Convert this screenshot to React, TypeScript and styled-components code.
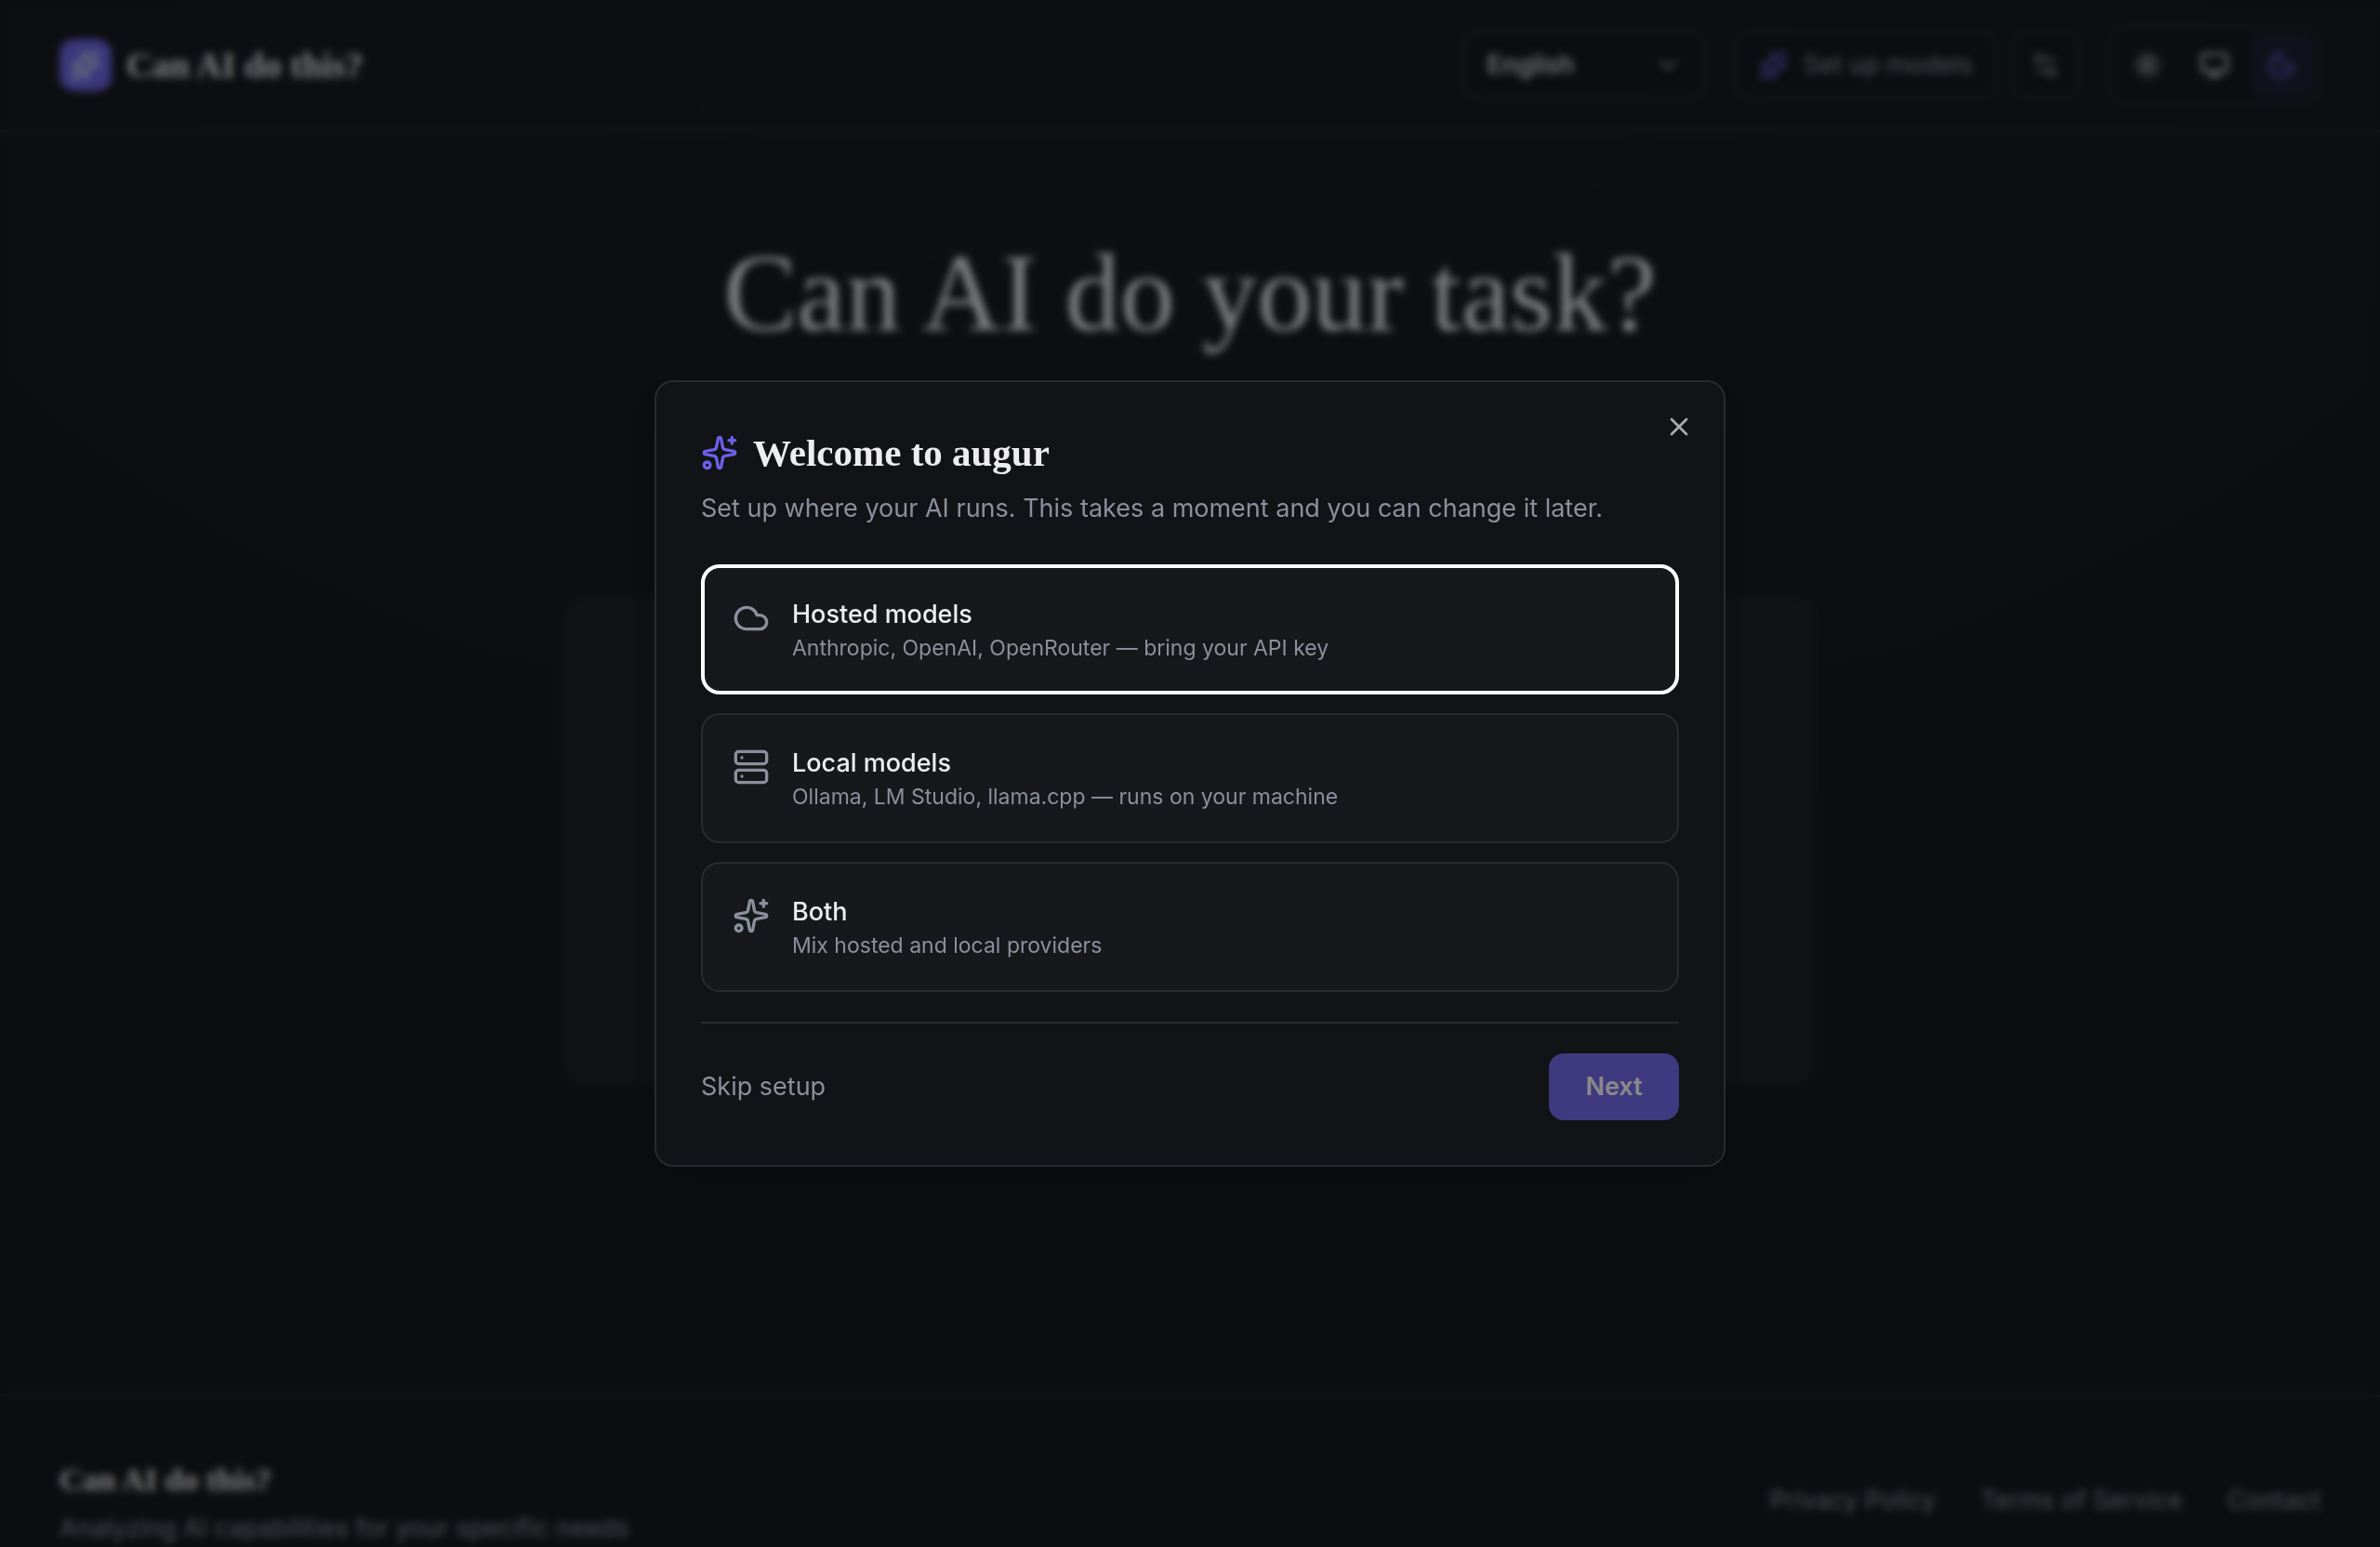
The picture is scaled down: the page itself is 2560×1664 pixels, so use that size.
import React from "react";
import styled, { createGlobalStyle, css } from "styled-components";
import {
  ChevronDown,
  Cloud,
  Monitor,
  Moon,
  Server,
  Settings2,
  Sparkles,
  Sun,
  X,
  type LucideIcon,
} from "lucide-react";

const color = {
  bg: "#0c0d10",
  panel: "#121316",
  option: "#17181b",
  surface: "#15161b",
  border: "#272b30",
  text: "#ededef",
  muted: "#8b909e",
  primary: "#6c61e8",
};

const sans = `Inter, "Liberation Sans", sans-serif`;
const serif = `"Liberation Serif", "Times New Roman", serif`;

const GlobalStyle = createGlobalStyle`
  *, *::before, *::after { box-sizing: border-box; }
  body {
    margin: 0;
    background: ${color.bg};
    color: ${color.text};
    font-family: ${sans};
    font-size: 27px;
    line-height: 40px;
  }
  button, select { font: inherit; color: inherit; }
  h1, h2, p { margin: 0; }
`;

/* Page behind the dialog */

const Page = styled.div`
  display: flex;
  flex-direction: column;
  height: 100vh;
  overflow: hidden;
  background: radial-gradient(ellipse 70% 60% at 50% 0, #101116, ${color.bg});
`;

const Header = styled.header`
  flex: none;
  display: flex;
  align-items: center;
  justify-content: space-between;
  height: 142px;
  padding: 0 64px;
  border-bottom: 2px solid ${color.border};
`;

const Brand = styled.a`
  display: flex;
  align-items: center;
  gap: 16px;
  color: ${color.text};
  font: 700 38px/56px ${serif};
  text-decoration: none;
`;

const BrandMark = styled.span`
  display: grid;
  place-items: center;
  width: 56px;
  height: 56px;
  border-radius: 16px;
  background: ${color.primary};
`;

const Toolbar = styled.div`
  display: flex;
  align-items: center;
  gap: 32px;
`;

const ToolGroup = styled.div`
  display: flex;
  gap: 16px;
`;

const outlined = css`
  height: 72px;
  border: 2px solid ${color.border};
  border-radius: 16px;
  background: ${color.bg};
`;

const LanguageField = styled.label`
  display: grid;
  align-items: center;
  width: 260px;
  color: ${color.muted};

  > * { grid-area: 1 / 1; }
  > svg { justify-self: end; margin-right: 24px; pointer-events: none; }
`;

const LanguageSelect = styled.select`
  ${outlined}
  width: 100%;
  padding: 0 64px 0 24px;
  appearance: none;
  color: ${color.text};
  font-weight: 500;
`;

const ToolButton = styled.button<{ $square?: boolean }>`
  ${outlined}
  display: flex;
  align-items: center;
  justify-content: center;
  gap: 16px;
  width: ${(p) => (p.$square ? "72px" : "auto")};
  padding: ${(p) => (p.$square ? "0" : "0 24px")};
  color: ${color.muted};
`;

const ThemeSwitch = styled.div`
  display: flex;
  gap: 4px;
  padding: 6px;
  border: 2px solid ${color.border};
  border-radius: 20px;
  background: ${color.bg};
`;

const ThemeButton = styled.button<{ $active?: boolean }>`
  display: grid;
  place-items: center;
  width: 68px;
  height: 68px;
  padding: 0;
  border: 0;
  border-radius: 14px;
  background: ${(p) => (p.$active ? "#17152b" : "transparent")};
  color: ${(p) => (p.$active ? color.primary : color.text)};
`;

const Main = styled.main`
  flex: none;
  display: flex;
  flex-direction: column;
  align-items: center;
  gap: 262px;
  padding: 112px 64px 332px;
`;

const Headline = styled.h1`
  font: 400 118px/124px ${serif};
  text-align: center;
`;

const TaskPanel = styled.section`
  width: 100%;
  max-width: 1348px;
  min-height: 528px;
  border-radius: 24px;
  background: ${color.surface};
`;

const Footer = styled.footer`
  flex: none;
  display: flex;
  align-items: center;
  justify-content: space-between;
  padding: 62px 64px;
  border-top: 2px solid ${color.border};
  color: ${color.muted};
`;

const FooterAbout = styled.div`
  display: flex;
  flex-direction: column;
  gap: 4px;
`;

const FooterTitle = styled.p`
  color: ${color.text};
  font: 700 34px/56px ${serif};
`;

const FooterNav = styled.nav`
  display: flex;
  gap: 48px;
`;

const FooterLink = styled.a`
  color: inherit;
  text-decoration: none;
`;

/* Dialog */

const Overlay = styled.div`
  position: fixed;
  inset: 0;
  display: grid;
  place-items: center;
  padding: 32px;
  background: rgba(12, 13, 16, 0.5);
  backdrop-filter: blur(4px);
`;

const Dialog = styled.div`
  position: relative;
  display: flex;
  flex-direction: column;
  gap: 32px;
  width: 100%;
  max-width: 1152px;
  padding: 48px;
  border: 2px solid ${color.border};
  border-radius: 20px;
  background: ${color.panel};
  box-shadow: 0 20px 30px -6px rgba(0, 0, 0, 0.14);
`;

const CloseButton = styled.button`
  position: absolute;
  top: 32px;
  right: 32px;
  display: grid;
  padding: 0;
  border: 0;
  background: none;
  opacity: 0.7;
`;

const DialogHeader = styled.div`
  display: flex;
  flex-direction: column;
  gap: 12px;
  margin-bottom: 8px;
  color: ${color.muted};
`;

const DialogTitle = styled.h2`
  display: flex;
  align-items: center;
  gap: 16px;
  color: ${color.text};
  font: 700 41px/56px ${serif};

  > svg { color: ${color.primary}; }
`;

const OptionList = styled.div`
  display: flex;
  flex-direction: column;
  gap: 20px;
`;

const Option = styled.button<{ $focused?: boolean }>`
  display: flex;
  gap: 24px;
  padding: 32px;
  border: 2px solid ${color.border};
  border-radius: 20px;
  background: ${color.option};
  color: ${color.muted};
  text-align: left;
  ${(p) =>
    p.$focused &&
    css`
      outline: 4px solid #fff;
      outline-offset: -4px;
    `}

  > svg { flex: none; margin-top: 4px; }
`;

const OptionText = styled.span`
  display: flex;
  flex-direction: column;
`;

const OptionName = styled.span`
  color: ${color.text};
  font-weight: 500;
`;

const OptionHint = styled.span`
  font-size: 23px;
  line-height: 32px;
`;

const DialogFooter = styled.div`
  display: flex;
  align-items: center;
  justify-content: space-between;
  padding-top: 32px;
  border-top: 2px solid ${color.border};
`;

const SkipButton = styled.button`
  padding: 0;
  border: 0;
  background: none;
  color: ${color.muted};
`;

const NextButton = styled.button`
  min-width: 140px;
  height: 72px;
  padding: 0 36px;
  border: 0;
  border-radius: 16px;
  background: ${color.primary};
  color: #fff;
  font-weight: 600;
  opacity: 0.5;
`;

const options: { icon: LucideIcon; name: string; hint: string }[] = [
  { icon: Cloud, name: "Hosted models", hint: "Anthropic, OpenAI, OpenRouter — bring your API key" },
  { icon: Server, name: "Local models", hint: "Ollama, LM Studio, llama.cpp — runs on your machine" },
  { icon: Sparkles, name: "Both", hint: "Mix hosted and local providers" },
];

const themes: { icon: LucideIcon; name: string }[] = [
  { icon: Sun, name: "Light" },
  { icon: Monitor, name: "System" },
  { icon: Moon, name: "Dark" },
];

const links = ["Privacy Policy", "Terms of Service", "Contact"];

function SetupDialog() {
  return (
    <Overlay>
      <Dialog role="dialog" aria-modal="true" aria-labelledby="setup-title">
        <DialogHeader>
          <DialogTitle id="setup-title">
            <Sparkles size={40} />
            Welcome to augur
          </DialogTitle>
          <p>Set up where your AI runs. This takes a moment and you can change it later.</p>
        </DialogHeader>
        <OptionList>
          {options.map(({ icon: Icon, name, hint }, i) => (
            <Option key={name} type="button" $focused={i === 0}>
              <Icon size={40} />
              <OptionText>
                <OptionName>{name}</OptionName>
                <OptionHint>{hint}</OptionHint>
              </OptionText>
            </Option>
          ))}
        </OptionList>
        <DialogFooter>
          <SkipButton type="button">Skip setup</SkipButton>
          <NextButton type="button" disabled>Next</NextButton>
        </DialogFooter>
        <CloseButton type="button" aria-label="Close">
          <X size={32} />
        </CloseButton>
      </Dialog>
    </Overlay>
  );
}

export default function App() {
  return (
    <>
      <GlobalStyle />
      <Page>
        <Header>
          <Brand href="#">
            <BrandMark><Sparkles size={32} /></BrandMark>
            Can AI do this?
          </Brand>
          <Toolbar>
            <LanguageField>
              <LanguageSelect aria-label="Language" defaultValue="English">
                <option>English</option>
              </LanguageSelect>
              <ChevronDown size={32} />
            </LanguageField>
            <ToolGroup>
              <ToolButton type="button">
                <Sparkles size={32} color={color.primary} />
                Set up models
              </ToolButton>
              <ToolButton type="button" $square aria-label="Settings">
                <Settings2 size={32} />
              </ToolButton>
            </ToolGroup>
            <ThemeSwitch>
              {themes.map(({ icon: Icon, name }) => (
                <ThemeButton key={name} type="button" aria-label={name} $active={name === "Dark"}>
                  <Icon size={32} />
                </ThemeButton>
              ))}
            </ThemeSwitch>
          </Toolbar>
        </Header>
        <Main>
          <Headline>Can AI do your task?</Headline>
          <TaskPanel />
        </Main>
        <Footer>
          <FooterAbout>
            <FooterTitle>Can AI do this?</FooterTitle>
            <p>Analyzing AI capabilities for your specific needs</p>
          </FooterAbout>
          <FooterNav>
            {links.map((l) => (
              <FooterLink key={l} href="#">{l}</FooterLink>
            ))}
          </FooterNav>
        </Footer>
      </Page>
      <SetupDialog />
    </>
  );
}
